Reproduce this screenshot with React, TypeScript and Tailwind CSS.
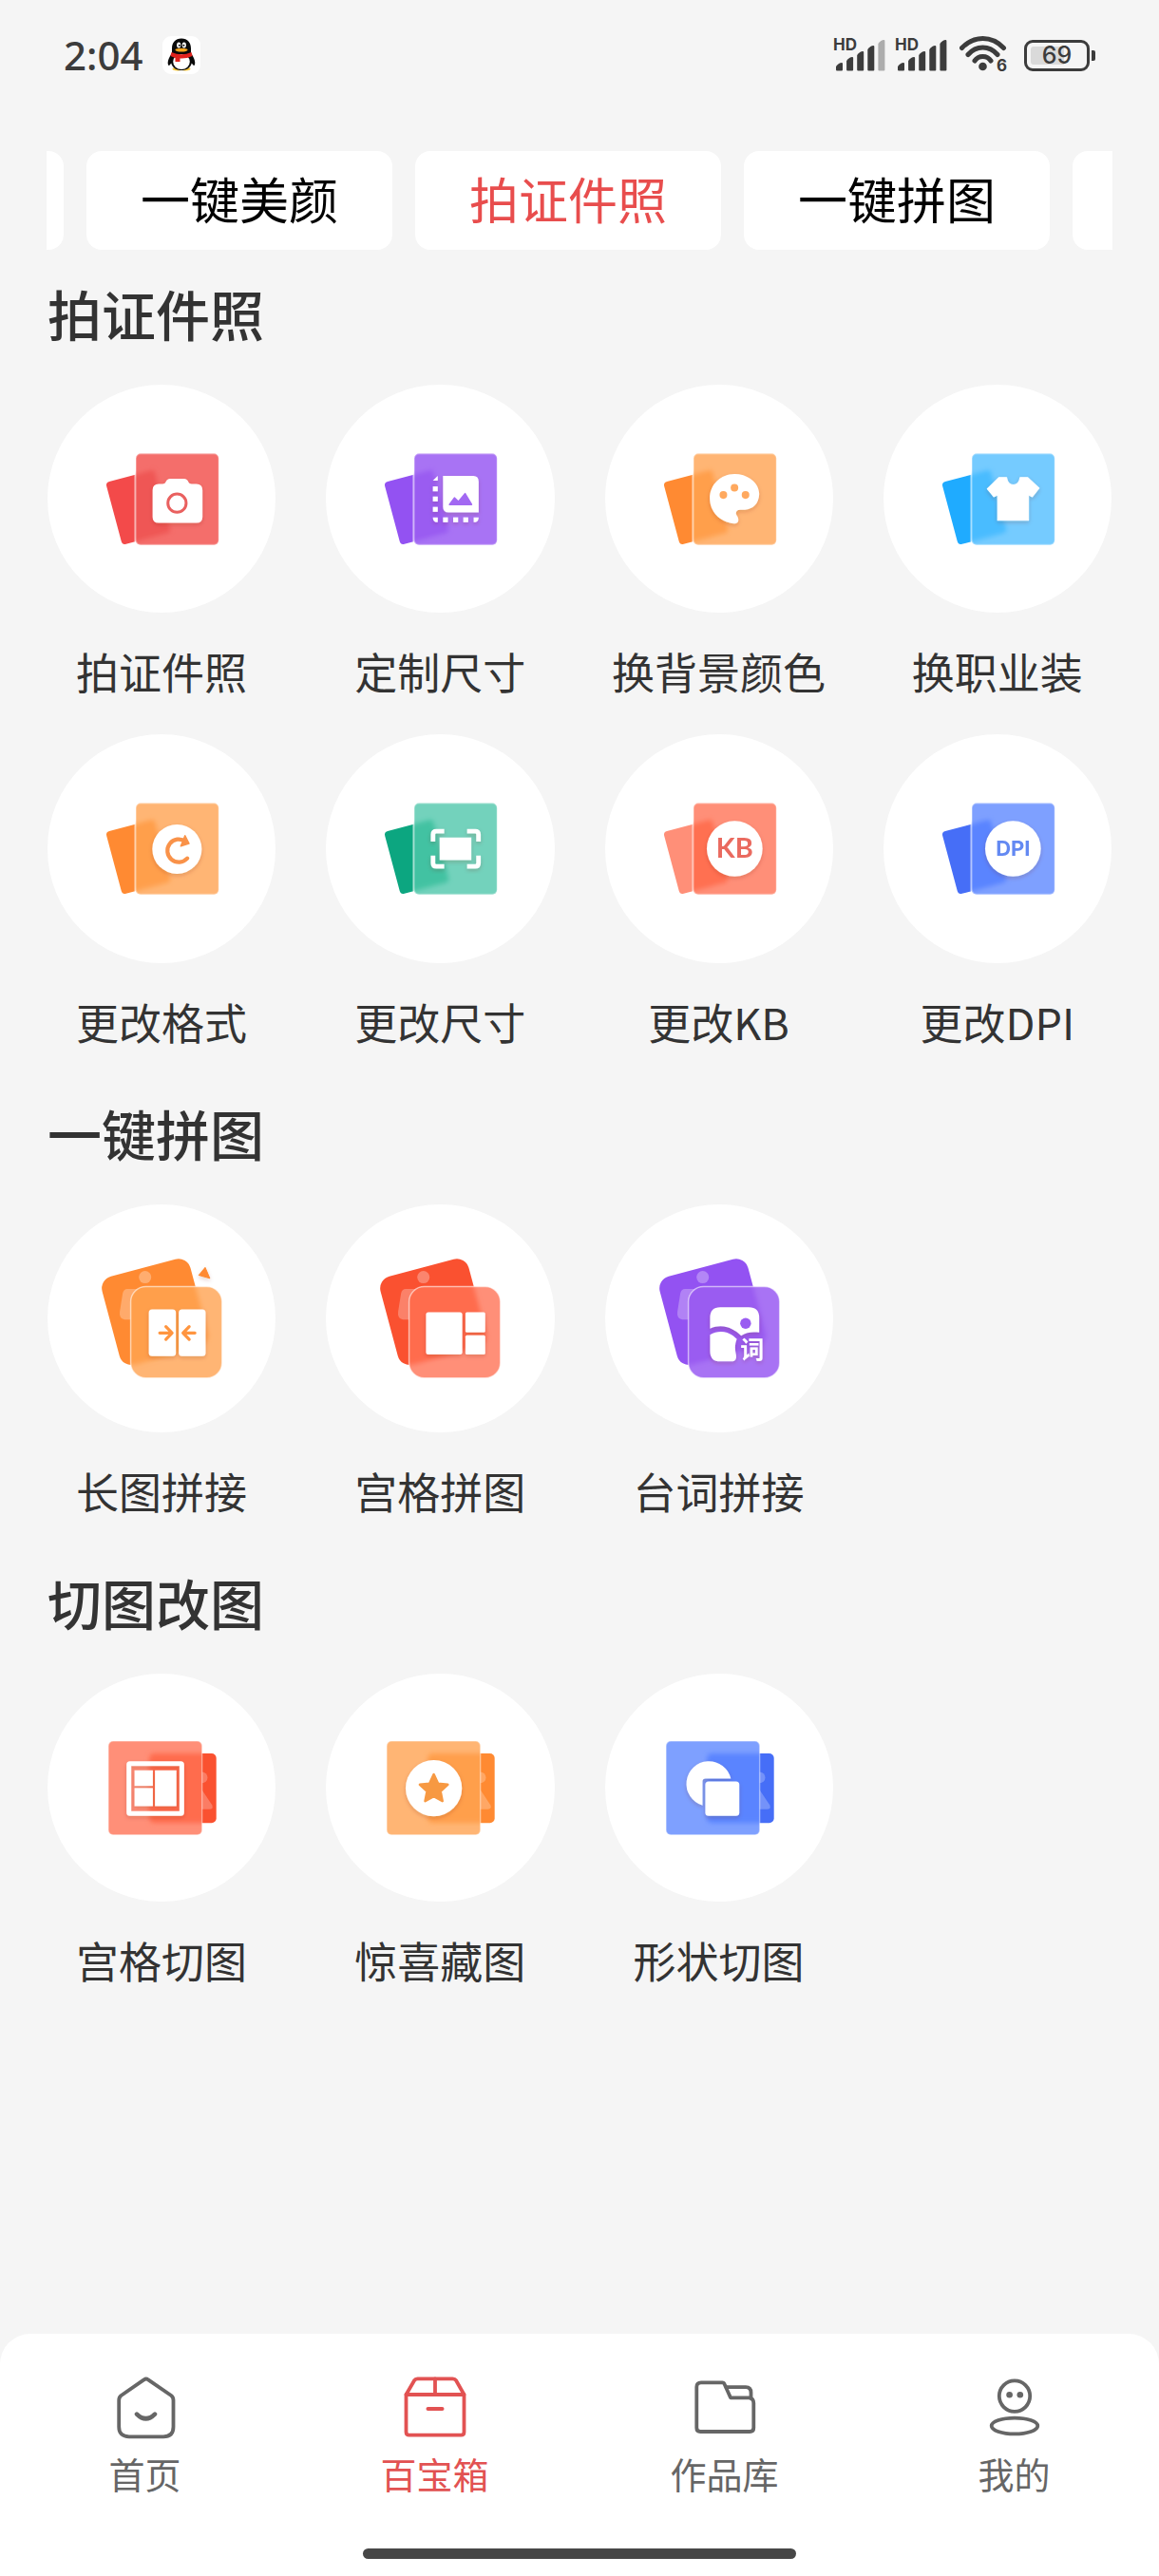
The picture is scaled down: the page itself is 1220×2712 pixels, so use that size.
import React, { useLayoutEffect, useRef, useState } from 'react';

type Tone = 'red' | 'purple' | 'orange' | 'sky' | 'green' | 'coral' | 'salmon' | 'indigo';

// back = solid card behind, front = glass card, mid = where the two overlap
const TONES: Record<Tone, { back: string; front: string; mid: string }> = {
  red: { back: '#f34a4a', front: '#f46e6b', mid: '#ef5655' },
  purple: { back: '#9352f2', front: '#a873f4', mid: '#9a5cf1' },
  orange: { back: '#ff8a32', front: '#ffb574', mid: '#ff9f4c' },
  sky: { back: '#1fabff', front: '#75cbff', mid: '#48bcff' },
  green: { back: '#0ca680', front: '#73d2bc', mid: '#43c2a2' },
  coral: { back: '#fa5130', front: '#ff8f78', mid: '#ff6c4d' },
  salmon: { back: '#ff8f78', front: '#ff8f78', mid: '#ff7051' },
  indigo: { back: '#466ef7', front: '#7ea0ff', mid: '#5a84ff' },
};

interface GlyphProps {
  id: string;
  tone: Tone;
  children: React.ReactNode;
}

const GlyphDefs: React.FC<{ id: string; children: React.ReactNode }> = ({ id, children }) => (
  <defs>
    <clipPath id={`${id}-clip`}>{children}</clipPath>
    <filter id={`${id}-blur`} x="-20%" y="-20%" width="140%" height="140%">
      <feGaussianBlur stdDeviation="2.5" />
    </filter>
    <filter id={`${id}-shadow`} x="-20%" y="-20%" width="140%" height="140%">
      <feDropShadow dx="0" dy="2" stdDeviation="2" floodColor="#7a2a10" floodOpacity="0.2" />
    </filter>
  </defs>
);

// Small tilted card behind a square glass card
const CardGlyph: React.FC<GlyphProps> = ({ id, tone, children }) => {
  const c = TONES[tone];
  return (
    <svg viewBox="0 0 240 240" className="h-full w-full" aria-hidden="true">
      <GlyphDefs id={id}>
        <rect x="92.5" y="72.5" width="87.5" height="96" rx="5" />
      </GlyphDefs>
      <rect x="69" y="95" width="53" height="68" rx="4" transform="rotate(-15 95.5 129)" fill={c.back} />
      <rect x="91.5" y="72" width="89" height="97" rx="5" fill="#fff" opacity="0.8" />
      <rect x="93" y="72.5" width="87" height="96" rx="5" fill={c.front} />
      <g clipPath={`url(#${id}-clip)`}>
        <rect x="69" y="95" width="53" height="68" rx="4" transform="rotate(-15 95.5 129)" fill={c.mid} filter={`url(#${id}-blur)`} />
      </g>
      <rect x="93" y="72.8" width="87" height="95.4" rx="5" fill="none" stroke="#fff" strokeOpacity="0.3" strokeWidth="1.2" />
      <g filter={`url(#${id}-shadow)`}>{children}</g>
    </svg>
  );
};

// Large tilted photo behind a rounded glass card
const StackGlyph: React.FC<GlyphProps> = ({ id, tone, children }) => {
  const c = TONES[tone];
  return (
    <svg viewBox="0 0 240 240" className="h-full w-full" aria-hidden="true">
      <GlyphDefs id={id}>
        <rect x="87.5" y="86.5" width="96" height="96" rx="16" />
      </GlyphDefs>
      <rect x="65" y="65" width="96" height="96" rx="13" transform="rotate(-15 113 113)" fill={c.back} />
      <circle cx="102.6" cy="76.5" r="6.5" fill="#fff" fillOpacity="0.3" />
      <path d="M84 89 H96 V121 H81 Q75 120 76 113 L79 94 Q80 89 84 89Z" fill="#fff" fillOpacity="0.28" />
      <rect x="87.5" y="86.5" width="96" height="96" rx="16" fill={c.front} />
      <g clipPath={`url(#${id}-clip)`}>
        <rect x="65" y="65" width="96" height="96" rx="13" transform="rotate(-15 113 113)" fill={c.mid} filter={`url(#${id}-blur)`} />
      </g>
      <rect x="87.5" y="86.5" width="96" height="96" rx="16" fill="none" stroke="#fff" strokeOpacity="0.55" strokeWidth="1.5" />
      <g filter={`url(#${id}-shadow)`}>{children}</g>
    </svg>
  );
};

// Glass card on the left with a photo sliding out to the right
const SlideGlyph: React.FC<GlyphProps> = ({ id, tone, children }) => {
  const c = TONES[tone];
  return (
    <svg viewBox="0 0 240 240" className="h-full w-full" aria-hidden="true">
      <GlyphDefs id={id}>
        <rect x="64" y="71" width="98" height="98" rx="5" />
      </GlyphDefs>
      <rect x="107" y="84" width="70.5" height="73" rx="5" fill={c.back} />
      <circle cx="162.5" cy="109.3" r="5.8" fill="#fff" fillOpacity="0.25" />
      <path d="M161 120 L173 138 Q175 142.5 170 142.7 H161Z" fill="#fff" fillOpacity="0.25" />
      <rect x="64" y="71" width="98.5" height="98.5" rx="5" fill={c.front} />
      <g clipPath={`url(#${id}-clip)`}>
        <rect x="107" y="84" width="70.5" height="73" rx="5" fill={c.mid} filter={`url(#${id}-blur)`} />
      </g>
      <rect x="64" y="71" width="98.5" height="98.5" rx="5" fill="none" stroke="#fff" strokeOpacity="0.35" strokeWidth="1.5" />
      <g filter={`url(#${id}-shadow)`}>{children}</g>
    </svg>
  );
};

const CameraGlyph = () => (
  <CardGlyph id="camera" tone="red">
    <path
      d="M117 104.5 H121 Q123.5 104.5 124.3 102.5 Q125.5 99 129 99 H143.5 Q147 99 148.2 102.5 Q149 104.5 151.5 104.5 H156.5 Q163 104.5 163 111 V139 Q163 145.3 156.5 145.3 H117 Q110.5 145.3 110.5 139 V111 Q110.5 104.5 117 104.5Z"
      fill="#fff"
    />
    <circle cx="136.2" cy="124.6" r="9.6" fill="none" stroke="#e9605e" strokeWidth="3" />
  </CardGlyph>
);

const CustomSizeGlyph = () => (
  <CardGlyph id="custom" tone="purple">
    <path d="M123.2 96 H155 Q160.7 96 160.7 102 V134.3 H129 Q123.2 134.3 123.2 128.5Z" fill="#fff" />
    <path d="M130 126 L135.2 119 L139.3 123 L146.4 114.5 L153.3 126Z" fill="#a269f2" stroke="#a269f2" strokeWidth="1.5" strokeLinejoin="round" />
    <g fill="#fff">
      <path d="M112.5 101 L117.7 96 V101Z" />
      <rect x="112.5" y="107" width="5.2" height="5.2" />
      <rect x="112.5" y="117.6" width="5.2" height="5.2" />
      <rect x="112.5" y="128.5" width="5.2" height="5.2" />
      <path d="M112.5 139.5 H117.7 V144.7 Q112.5 144.7 112.5 139.5Z" />
      <rect x="123.2" y="139.5" width="5.2" height="5.2" />
      <rect x="133.9" y="139.5" width="5.2" height="5.2" />
      <rect x="144.5" y="139.5" width="5.2" height="5.2" />
      <path d="M155.4 139.5 H160.7 Q160.7 144.7 155.4 144.7Z" />
    </g>
  </CardGlyph>
);

const PaletteGlyph = () => (
  <CardGlyph id="palette" tone="orange">
    <path
      d="M136 146 C121 145 110 134 110 119.5 C110 105 121.5 94 136 94 C151 94 162 104 162 115 C162 125 155 131.5 147 131.5 H142 C138 131.5 136.5 135 138.5 137.5 C141 140.5 141 146.5 136 146Z"
      fill="#fff"
    />
    <circle cx="124.3" cy="116" r="4" fill="#ffa95e" />
    <circle cx="136" cy="108.3" r="4" fill="#ffa95e" />
    <circle cx="147.6" cy="116" r="4" fill="#ffa95e" />
  </CardGlyph>
);

const ShirtGlyph = () => (
  <CardGlyph id="shirt" tone="sky">
    <path
      d="M121.5 97.6 H129.5 Q130.5 105.3 136.5 105.3 Q142.5 105.3 143.6 97.6 H151.5 L163.6 108.8 L156.5 117.8 L152.5 116 V142.6 H120 V116 L116 117.8 L109.2 109.5Z"
      fill="#fff"
      stroke="#fff"
      strokeLinejoin="round"
    />
  </CardGlyph>
);

const FormatGlyph = () => (
  <CardGlyph id="format" tone="orange">
    <circle cx="136.2" cy="120.8" r="26" fill="#fff" />
    <path d="M147 130.5 A12 12 0 1 1 145 112.6" fill="none" stroke="#f99248" strokeWidth="4.2" strokeLinecap="round" />
    <path d="M144.6 106.6 L148.8 115 L140.2 117.6Z" fill="#f99248" stroke="#f99248" strokeWidth="1.5" strokeLinejoin="round" />
  </CardGlyph>
);

const ResizeGlyph = () => (
  <CardGlyph id="resize" tone="green">
    <rect x="119.6" y="108.6" width="33.4" height="23.8" fill="#fff" />
    <path
      d="M112.7 113 V105.5 Q112.7 102 116.2 102 H124.5 M148.5 102 H157 Q160.5 102 160.5 105.5 V113 M160.5 127.5 V135.5 Q160.5 139 157 139 H148.5 M124.5 139 H116.2 Q112.7 139 112.7 135.5 V127.5"
      fill="none"
      stroke="#fff"
      strokeWidth="4.8"
    />
  </CardGlyph>
);

const KbGlyph = () => (
  <CardGlyph id="kb" tone="salmon">
    <circle cx="136.2" cy="120.4" r="29.3" fill="#fff" />
    <text x="136.2" y="130" textAnchor="middle" fontFamily="Lato, sans-serif" fontWeight="700" fontSize="29" fill="#ea6a5f">KB</text>
  </CardGlyph>
);

const DpiGlyph = () => (
  <CardGlyph id="dpi" tone="indigo">
    <circle cx="136.2" cy="120.4" r="29.3" fill="#fff" />
    <text x="136.2" y="128.3" textAnchor="middle" fontFamily="Inter, sans-serif" fontWeight="700" fontSize="22" fill="#6389f2">DPI</text>
  </CardGlyph>
);

const LongStitchGlyph = () => (
  <StackGlyph id="long" tone="orange">
    <path d="M165.8 66.5 L159.2 74.5 L170.6 77.6Z" fill="#ff8a32" stroke="#ff8a32" strokeLinejoin="round" />
    <rect x="106.5" y="110.3" width="28.5" height="49.2" rx="3.5" fill="#fff" />
    <rect x="138" y="110.3" width="28.3" height="49.2" rx="3.5" fill="#fff" />
    <path
      d="M118 135.2 H131 M124.5 128.5 L131 135.2 L124.5 142 M155 135.2 H142.5 M149 128.5 L142.5 135.2 L149 142"
      fill="none"
      stroke="#ff953f"
      strokeWidth="3.2"
      strokeLinecap="round"
      strokeLinejoin="round"
    />
  </StackGlyph>
);

const GridStitchGlyph = () => (
  <StackGlyph id="gridstitch" tone="coral">
    <rect x="105.3" y="113.5" width="38.2" height="44.3" rx="2.5" fill="#fff" />
    <rect x="146.8" y="113.5" width="20.8" height="21.2" rx="1.5" fill="#fff" />
    <rect x="146.8" y="137.5" width="20.8" height="20.3" rx="1.5" fill="#fff" />
  </StackGlyph>
);

const LinesGlyph = () => (
  <StackGlyph id="lines" tone="purple">
    <path
      d="M121 108.2 H151 Q162 108.2 162 119.2 V134.6 C155 134 149 134 143 138 C134 129.5 123 125 110.3 130.5 V119.2 Q110.3 108.2 121 108.2Z"
      fill="#fff"
    />
    <circle cx="147.7" cy="125.2" r="5.7" fill="#9a5cf1" />
    <path
      d="M110.3 137 C120 131.5 130 133 138.5 141.5 C136.3 147 136.3 152 137.5 157 C138.5 162 137.5 165.2 133 165.2 H121 Q110.3 165.2 110.3 154Z"
      fill="#fff"
    />
    <text x="142" y="161.5" fontFamily="'Noto Sans CJK SC', sans-serif" fontWeight="700" fontSize="25" fill="#fff">词</text>
  </StackGlyph>
);

const GridCutGlyph = () => (
  <SlideGlyph id="gridcut" tone="coral">
    <rect x="85.6" y="94.6" width="55.6" height="52.6" rx="1" fill="none" stroke="#fff" strokeWidth="5" strokeLinejoin="round" />
    <rect x="91.5" y="101.7" width="19.3" height="16.4" fill="#fff" />
    <rect x="91.5" y="120.3" width="19.3" height="19.1" fill="#fff" />
    <rect x="113" y="101.7" width="22.6" height="37.7" fill="#fff" />
  </SlideGlyph>
);

const StarGlyph = () => (
  <SlideGlyph id="star" tone="orange">
    <circle cx="113.5" cy="120.5" r="29.6" fill="#fff" />
    <path
      d="M113.5 106 L117.9 115.5 L128.2 116.7 L120.6 123.8 L122.6 134 L113.5 129 L104.4 134 L106.4 123.8 L98.8 116.7 L109.1 115.5Z"
      fill="#f79943"
      stroke="#f79943"
      strokeWidth="2.5"
      strokeLinejoin="round"
    />
  </SlideGlyph>
);

const ShapeGlyph = () => (
  <SlideGlyph id="shape" tone="indigo">
    <path
      d="M102.4 138.5 A23.7 23.7 0 1 1 132.2 110.4 H105.5 Q102.4 110.4 102.4 113.5Z"
      fill="#fff"
    />
    <rect x="105.3" y="113.4" width="35.8" height="36.2" rx="3.5" fill="#fff" />
  </SlideGlyph>
);

interface Tool {
  label: string;
  Glyph: React.FC;
}

const SECTIONS: { title: string; tools: Tool[] }[] = [
  {
    title: '拍证件照',
    tools: [
      { label: '拍证件照', Glyph: CameraGlyph },
      { label: '定制尺寸', Glyph: CustomSizeGlyph },
      { label: '换背景颜色', Glyph: PaletteGlyph },
      { label: '换职业装', Glyph: ShirtGlyph },
      { label: '更改格式', Glyph: FormatGlyph },
      { label: '更改尺寸', Glyph: ResizeGlyph },
      { label: '更改KB', Glyph: KbGlyph },
      { label: '更改DPI', Glyph: DpiGlyph },
    ],
  },
  {
    title: '一键拼图',
    tools: [
      { label: '长图拼接', Glyph: LongStitchGlyph },
      { label: '宫格拼图', Glyph: GridStitchGlyph },
      { label: '台词拼接', Glyph: LinesGlyph },
    ],
  },
  {
    title: '切图改图',
    tools: [
      { label: '宫格切图', Glyph: GridCutGlyph },
      { label: '惊喜藏图', Glyph: StarGlyph },
      { label: '形状切图', Glyph: ShapeGlyph },
    ],
  },
];

const TABS = ['照片修复', '一键美颜', '拍证件照', '一键拼图', '切图改图'];

const HomeIcon = () => (
  <>
    <path d="M34.5 6.4 Q36.8 4.6 39 6.4 L63.2 23 Q65.5 24.8 65.5 28 V56 Q65.5 66.3 55 66.3 H19 Q8.2 66.3 8.2 56 V28 Q8.2 24.8 10.5 23Z" />
    <path d="M27 42.6 Q36.5 52 46 42.6" strokeWidth="4.6" />
  </>
);

const BoxIcon = () => (
  <>
    <path d="M5.5 22 L14.2 7 Q15.2 5.3 17.5 5.3 H54.5 Q57 5.3 58 7 L66.5 22 V61.5 Q66.5 64.6 63.4 64.6 H8.6 Q5.5 64.6 5.5 61.5Z" />
    <path d="M5.5 22 H66.5 M36 5.3 V22" />
    <path d="M28.5 37 H43.5" strokeWidth="4" />
  </>
);

const FolderIcon = () => (
  <>
    <path d="M11 9.4 H33.5 Q35 9.4 35.6 11 L42 25.3 H61.5 Q66.3 26 66.3 31 V57 Q66.3 61 62.3 61 H10.3 Q6.3 61 6.3 57 V14 Q6.3 9.4 11 9.4Z" />
    <path d="M37.5 14.2 H58 Q63.5 14.2 63.5 20 V25.5" />
  </>
);

const UserIcon = () => (
  <>
    <circle cx="36" cy="23.6" r="16.2" />
    <circle cx="30.6" cy="22.3" r="3.3" fill="currentColor" stroke="none" />
    <circle cx="41.8" cy="22.3" r="3.3" fill="currentColor" stroke="none" />
    <ellipse cx="36" cy="55" rx="24.3" ry="8.4" />
  </>
);

const NAV = [
  { label: '首页', Icon: HomeIcon },
  { label: '百宝箱', Icon: BoxIcon },
  { label: '作品库', Icon: FolderIcon },
  { label: '我的', Icon: UserIcon },
];

const Signal: React.FC<{ level: number }> = ({ level }) => (
  <svg viewBox="0 -6 56 50" className="h-[50px] w-[56px]" aria-hidden="true">
    <text x="0" y="14" fontFamily="Inter, sans-serif" fontWeight="700" fontSize="17" fill="#3c3c3c">HD</text>
    {[27, 21, 15, 9, 3].map((top, i) => (
      <path
        key={top}
        transform={`translate(${3 + i * 11.1} 0)`}
        d={`M0 ${top + 4} Q3 ${top} 6 ${top} Q7 ${top} 7 ${top + 1} V34.5 Q7 35.5 6 35.5 H1 Q0 35.5 0 34.5Z`}
        fill={i < level ? '#3c3c3c' : '#adadad'}
      />
    ))}
  </svg>
);

const StatusBar = () => (
  <header className="flex h-[116px] items-center justify-between pr-[67px] pl-[67px] text-[#3c3c3c]">
    <div className="flex items-center gap-5">
      <time className="font-['Noto_Sans',sans-serif] text-[42px] leading-[48px] font-medium">2:04</time>
      <svg viewBox="0 0 40 40" className="size-10" aria-hidden="true">
        <rect width="40" height="40" rx="9" fill="#fff" />
        <path d="M11 35.5 Q9 33.5 14 33 H26 Q31 33.5 29 35.5 Q25 37 20 36 Q15 37 11 35.5Z" fill="#f6c437" />
        <path d="M20 2.5 C26.5 2.5 30 7 30 13 V18 C33.5 23 35.5 28 33.5 31 C32.5 31 31.5 29.5 30.8 28.5 C29.5 33.5 25 36 20 36 C15 36 10.5 33.5 9.2 28.5 C8.5 29.5 7.5 31 6.5 31 C4.5 28 6.5 23 10 18 V13 C10 7 13.5 2.5 20 2.5Z" fill="#0a0a0a" />
        <ellipse cx="20" cy="27" rx="8.8" ry="8" fill="#fff" />
        <ellipse cx="17.2" cy="9.6" rx="2.1" ry="3" fill="#fff" />
        <ellipse cx="22.8" cy="9.6" rx="2.1" ry="3" fill="#fff" />
        <circle cx="17.8" cy="9.8" r="1" fill="#0a0a0a" />
        <circle cx="22.4" cy="9.8" r="1" fill="#0a0a0a" />
        <ellipse cx="20" cy="14.6" rx="6.6" ry="1.9" fill="#f5a51d" />
        <path d="M9.5 17 Q20 21.5 30.5 17 L31.5 21 Q25 24 18.5 23.5 V27 H13.5 V23 L8.5 21Z" fill="#e0221d" />
      </svg>
    </div>
    <div className="flex items-center">
      <div className="flex gap-[9px]">
        <Signal level={4} />
        <Signal level={5} />
      </div>
      <svg viewBox="0 -4 56 50" className="ml-3 h-[50px] w-[56px]" aria-hidden="true">
        <g fill="none" stroke="#3c3c3c" strokeWidth="5" strokeLinecap="round">
          <path d="M2.5 13.5 Q12 3.5 24.5 3.5 Q37 3.5 46.5 13.5" />
          <path d="M9 20.5 Q15.5 13 24.5 13 Q33.5 13 40 20.5" />
          <path d="M16 27 Q19 22.5 24.5 22.5 Q30 22.5 33 27" />
        </g>
        <circle cx="24.5" cy="33" r="4.3" fill="#3c3c3c" />
        <text x="39" y="38" fontFamily="Inter, sans-serif" fontWeight="700" fontSize="17" fill="#3c3c3c">6</text>
      </svg>
      <div className="relative ml-3 flex h-[33px] w-[69px] items-center justify-center rounded-[9px] border-3 border-[#3c3c3c]">
        <div className="absolute top-1 left-1 h-[19px] w-[35px] rounded-l-[3px] bg-[#dadada]" />
        <span className="relative font-['Inter',sans-serif] text-[25px] leading-[26px] font-medium">69</span>
      </div>
      <div className="ml-0.5 h-[11px] w-1 rounded-r-xs bg-[#3c3c3c]" />
    </div>
  </header>
);

const App: React.FC = () => {
  const [tab, setTab] = useState('拍证件照');
  const [page, setPage] = useState('百宝箱');
  const tabsRef = useRef<HTMLDivElement>(null);

  useLayoutEffect(() => {
    if (tabsRef.current) tabsRef.current.scrollLeft = 304;
  }, []);

  return (
    <div className="flex min-h-screen flex-col bg-[#f5f5f5] font-['Noto_Sans_CJK_SC',sans-serif] text-[#333]">
      <StatusBar />

      {/* Category tabs */}
      <div ref={tabsRef} className="mx-[49px] mt-[43px] flex gap-6 overflow-x-auto [scrollbar-width:none]">
        {TABS.map((name) => (
          <button
            key={name}
            type="button"
            onClick={() => setTab(name)}
            className={`h-[104px] w-[322px] shrink-0 rounded-2xl bg-white pb-1 text-[52px] leading-[64px] ${
              name === tab ? 'text-[#e84d4d]' : 'text-black'
            }`}
          >
            {name}
          </button>
        ))}
      </div>

      <main className="flex flex-col gap-[45px] px-[50px] pt-[27px] pb-16">
        {SECTIONS.map((section) => (
          <section key={section.title}>
            <h2 className="mb-[37px] text-[57px] leading-[78px] font-medium">{section.title}</h2>
            <div className="grid grid-cols-4 gap-x-[53px] gap-y-[34px]">
              {section.tools.map(({ label, Glyph }) => (
                <button key={label} type="button" className="flex flex-col items-center gap-[30px]">
                  <span className="aspect-square w-full rounded-full bg-white">
                    <Glyph />
                  </span>
                  <span className="text-[45px] leading-[64px] whitespace-nowrap">{label}</span>
                </button>
              ))}
            </div>
          </section>
        ))}
      </main>

      {/* Bottom navigation */}
      <footer className="mt-auto rounded-t-[32px] bg-white pt-[42px] pb-[18px]">
        <nav className="grid grid-cols-4">
          {NAV.map(({ label, Icon }) => (
            <a
              key={label}
              href="#"
              onClick={() => setPage(label)}
              className={`flex flex-col items-center gap-[9px] ${label === page ? 'text-[#e25252]' : 'text-[#666]'}`}
            >
              <svg
                viewBox="0 0 72 72"
                className="size-[72px]"
                fill="none"
                stroke="currentColor"
                strokeWidth="3.8"
                strokeLinecap="round"
                strokeLinejoin="round"
                aria-hidden="true"
              >
                <Icon />
              </svg>
              <span className="text-[38px] leading-[48px]">{label}</span>
            </a>
          ))}
        </nav>
        <div className="mx-auto mt-[55px] h-[11px] w-[456px] rounded-full bg-[#474747]" />
      </footer>
    </div>
  );
};

export default App;
